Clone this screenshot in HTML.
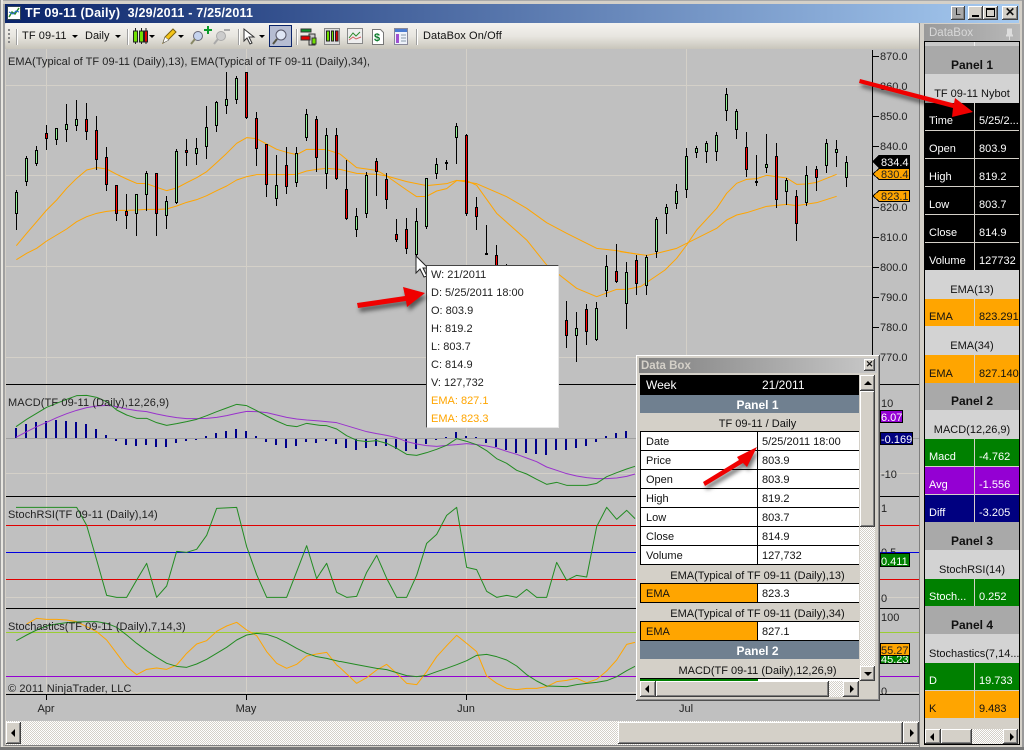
<!DOCTYPE html>
<html><head><meta charset="utf-8"><title>TF 09-11 (Daily)</title>
<style>
html,body{margin:0;padding:0;width:1024px;height:750px;overflow:hidden;background:#d4d0c8}
body{position:relative;font:11px/13px "Liberation Sans",sans-serif;color:#111}
div{position:absolute;box-sizing:border-box;white-space:nowrap}
svg{position:absolute;left:0;top:0}
svg text{font:11px "Liberation Sans",sans-serif;fill:#222}
.btn{background:#d4d0c8;box-shadow:inset -1px -1px #404040,inset 1px 1px #fff,inset -2px -2px #808080}
.hatch{background:repeating-conic-gradient(#d4d0c8 0 25%,#fff 0 50%) 0 0/2px 2px}
.tl::after,.tr::after,.tu::after,.td::after{content:"";position:absolute;left:50%;top:50%;width:0;height:0;border:4px solid transparent}
.tl::after{border-right-color:#000;border-left:0;margin:-4px 0 0 -3px}
.tr::after{border-left-color:#000;border-right:0;margin:-4px 0 0 -1px}
.tu::after{border-bottom-color:#000;border-top:0;margin:-2px 0 0 -4px}
.td::after{border-top-color:#000;border-bottom:0;margin:-2px 0 0 -4px}
.dd{width:0;height:0;border:3px solid transparent;border-top:3px solid #000;border-bottom:0;top:35px}
.sep{width:1px;height:16px;top:29px;background:#a0a0a0;box-shadow:1px 0 #fff}
/* right panel */
.r{left:925px;width:94px;padding-bottom:2px;display:flex;align-items:flex-end;justify-content:center;overflow:hidden}
.pn{background:#a9a9a9;font-weight:bold;font-size:12px;color:#111;padding-bottom:2px}
.hd{background:#d3d3d3}
.c{padding:0 0 2px 4px;display:flex;align-items:flex-end;overflow:hidden}
.a{left:925px;width:49px}.b{left:975px;width:44px}
.k{background:#000;color:#fff}.o{background:#ffa500;color:#111}.g{background:#008000;color:#fff}.p{background:#9400d3;color:#fff}.n{background:#000080;color:#fff}
/* data box dialog */
.ph{left:0;width:235px;text-align:center;height:19px;line-height:22px;background:#d4d0c8;overflow:hidden}
.pb{left:0;width:219px;text-align:center;height:18px;line-height:21px;background:#708090;color:#fff;font-weight:bold;font-size:12px;padding-left:16px;overflow:hidden}
.l{left:0;width:118px;height:19px;background:#fff;border:1px solid #000;border-width:0 1px 1px 1px;padding-left:5px;line-height:20px}
.v{left:118px;width:101px;height:19px;background:#fff;border-bottom:1px solid #000;padding-left:4px;line-height:20px}
.tip{left:431px;color:#222;line-height:14px}
</style></head>
<body>
<!-- outer frame -->
<div style="left:0;top:0;width:1024px;height:4px;background:#d4d0c8;border-top:1px solid #aaa"></div>
<div style="left:0;top:0;width:1px;height:750px;background:#999"></div>
<div style="left:1px;top:0;width:2px;height:750px;background:#e8e6e0"></div>
<div style="left:3px;top:4px;width:2px;height:742px;background:#a0a0a0"></div>
<div style="left:1022px;top:0;width:2px;height:750px;background:#999"></div>
<div style="left:0;top:747px;width:1024px;height:3px;background:#777"></div>

<!-- title bar -->
<div style="left:5px;top:4px;width:1014px;height:19px;background:linear-gradient(90deg,#0a246a,#a6caf0)"></div>
<svg width="1024" height="30" style="z-index:2"><rect x="7.5" y="6.5" width="13" height="13" fill="#fff" stroke="#345"/><path d="M9 17l3-5 3 2 4-6" fill="none" stroke="#2a8a2a" stroke-width="1.5"/><path d="M9 12l4 2 3-3 3 1" fill="none" stroke="#2a6ad0"/></svg>
<div style="left:25px;top:5px;color:#fff;font:bold 12.5px/17px 'Liberation Sans',sans-serif;letter-spacing:.22px;white-space:pre">TF 09-11 (Daily)  3/29/2011 - 7/25/2011</div>
<div class="btn" style="left:951px;top:6px;width:14px;height:14px;background:#a8a8a8;font:10px/13px 'Liberation Sans',sans-serif;text-align:center">L</div>
<div class="btn" style="left:968px;top:6px;width:15px;height:14px"><div style="left:4px;top:9px;width:7px;height:2px;background:#000"></div></div>
<div class="btn" style="left:983px;top:6px;width:15px;height:14px"><div style="left:3px;top:2px;width:9px;height:9px;border:1px solid #000;border-top-width:2px"></div></div>
<div class="btn" style="left:1002px;top:6px;width:16px;height:14px;font:bold 12px/13px 'Liberation Sans',sans-serif;text-align:center">✕</div>

<!-- toolbar -->
<div style="left:5px;top:23px;width:914px;height:26px;background:linear-gradient(#f4f3ef,#e8e6e0 50%,#c8c5bb);border-radius:2px 2px 0 0"></div>
<div style="left:8px;top:29px;width:2px;height:15px;background:repeating-linear-gradient(#888 0 2px,transparent 2px 4px)"></div>
<div class="sep" style="left:16px"></div>
<div style="left:22px;top:29px;line-height:15px;letter-spacing:.1px">TF 09-11</div><div class="dd" style="left:72px"></div>
<div style="left:85px;top:29px;line-height:15px">Daily</div><div class="dd" style="left:115px"></div>
<div class="sep" style="left:127px"></div><div class="dd" style="left:149px"></div>
<div class="dd" style="left:178px"></div><div class="sep" style="left:238px"></div><div class="dd" style="left:259px"></div>
<div style="left:269px;top:25px;width:23px;height:22px;background:#b6bdd2;border:1px solid #0a246a"></div>
<div class="sep" style="left:296px"></div><div class="sep" style="left:416px"></div>
<div style="left:423px;top:29px;line-height:15px;letter-spacing:.1px">DataBox On/Off</div>
<svg width="1024" height="50" style="z-index:2">
<g stroke="#222"><path d="M135.5 28v16M141.5 28v16M146 28v16"/><rect x="133.5" y="31" width="4" height="11" fill="#70e000"/><rect x="139.5" y="31" width="4" height="11" fill="#70e000"/><rect x="144.5" y="31" width="3" height="11" fill="#e00000"/></g>
<path d="M163 43l2-6 8-8 3 3-8 8z" fill="#f5c518" stroke="#7a6010"/><path d="M163 43l2-6 4 3z" fill="#fff" stroke="#555" stroke-width=".5"/>
<circle cx="198" cy="36" r="4.5" fill="#c5d3ee" stroke="#667"/><path d="M195 39l-4 5" stroke="#886" stroke-width="2"/><path d="M204 29h3v-3h2v3h3v2h-3v3h-2v-3h-3z" fill="#0a9a2a"/>
<circle cx="221" cy="36" r="4.5" fill="#ccc" stroke="#aaa"/><path d="M218 39l-4 5" stroke="#aaa" stroke-width="2"/><path d="M224 30h6" stroke="#aaa" stroke-width="2"/>
<path d="M244 29v12l3-3 3 6 2-1-3-6h5z" fill="#fff" stroke="#333"/>
<circle cx="281" cy="35" r="5" fill="#dfe6f5" stroke="#556"/><path d="M277 39l-4 5" stroke="#554" stroke-width="2"/>
<g stroke="#333"><rect x="301" y="29" width="10" height="3" fill="#0a9a2a"/><rect x="309" y="34" width="6" height="11" fill="#ccc"/><rect x="301" y="36" width="9" height="4" fill="#e00000"/><rect x="312" y="38" width="4" height="6" fill="#70e000"/></g>
<rect x="324.5" y="28.5" width="15" height="16" fill="#ddd" stroke="#888"/><g stroke="#222"><rect x="326.5" y="31" width="3" height="10" fill="#70e000"/><rect x="331.5" y="31" width="2" height="10" fill="#70e000"/><rect x="335.5" y="31" width="2.5" height="10" fill="#e00000"/></g>
<rect x="347.5" y="28.5" width="15" height="15" fill="#eee" stroke="#888"/><path d="M349 38l4-5 3 3 4-4" fill="none" stroke="#2a8a2a"/><path d="M349 40l4-3 3 2 5-2" fill="none" stroke="#d06060"/>
<path d="M372.5 29.5h8l3 3v12h-11z" fill="#fff" stroke="#777"/><text x="374" y="41" style="font:bold 11px 'Liberation Sans',sans-serif;fill:#0a7a2a">$</text>
<rect x="394.5" y="28.5" width="13" height="16" fill="#eef2fa" stroke="#889"/><rect x="395" y="29" width="12" height="3" fill="#4a7ad0"/><rect x="396" y="34" width="3" height="9" fill="#a050d0"/><path d="M401 35h5M401 38h5M401 41h5" stroke="#89a"/>
</svg>

<!-- chart background -->
<div style="left:6px;top:49px;width:913px;height:672px;background:#c0c0c0"></div>
<div style="left:919px;top:23px;width:1px;height:724px;background:#808080"></div>

<svg width="1024" height="750">
<g shape-rendering="crispEdges" stroke="#d4d0c8" fill="none">
<path d="M46.5 49V694M246.5 49V694M466.5 49V694M686.5 49V694"/>
<path d="M6 85.5H872M6 175.5H872M6 266.5H872M6 357.5H872M6 473.5H919M6 597.5H919M6 692.5H919"/>
</g>
<g shape-rendering="crispEdges" fill="none">
<path d="M6 438.5H919" stroke="#a0a0a0"/>
<path d="M6 525.5H919M6 579.5H919" stroke="#e00000"/><path d="M6 552.5H919" stroke="#0000e0"/>
<path d="M6 632.5H919" stroke="#9acd32"/><path d="M6 676.5H919" stroke="#9400d3"/>
<path d="M6 384.5H919M6 496.5H919M6 608.5H919M6 694.5H919M872.5 50V385" stroke="#000"/>
<path d="M46.5 694v6M246.5 694v6M466.5 694v6M686.5 694v6" stroke="#000"/>
<path d="M872 56.5h7M872 86.5h7M872 116.5h7M872 146.5h7M872 207.5h7M872 237.5h7M872 267.5h7M872 297.5h7M872 327.5h7M872 357.5h7" stroke="#000"/>
</g>
<!-- EMA lines -->
<g fill="none" stroke="#ffa500" stroke-linejoin="round">
<polyline vector-effect="non-scaling-stroke" transform="translate(0 80) scale(.33333)" points="49,497 80,460 110,425 140,390 170,360 200,325 230,295 260,270 290,263 320,267 350,283 380,297 410,310 440,311 470,322 500,332 530,324 560,308 590,293 620,275 650,248 680,220 710,190 740,173 770,176 800,192 830,208 860,217 890,224 920,208 950,208 980,209 1020,222"/>
<polyline vector-effect="non-scaling-stroke" transform="translate(0 80) scale(.33333)" points="49,539 80,520 110,505 140,483 170,465 200,447 230,425 260,410 290,400 320,394 350,391 380,391 410,390 440,388 470,388 500,387 530,378 560,367 590,359 620,347 650,332 680,318 710,300 740,290 770,284 800,284 830,284 860,284 890,283 920,273 950,268 980,265 1020,268"/>
<polyline vector-effect="non-scaling-stroke" transform="translate(340 80) scale(.33333)" points="0,268 50,280 110,283 140,288 200,305 260,317 320,311 350,301 410,311 500,350 560,385 620,428 680,460 770,505 830,512 900,524"/>
<polyline vector-effect="non-scaling-stroke" transform="translate(340 80) scale(.33333)" points="0,222 50,263 110,271 140,288 200,330 230,350 260,349 290,333 320,326 350,302 380,302 410,316 470,400 560,480 620,555 710,625 770,650 830,628 860,628 900,620"/>
<polyline vector-effect="non-scaling-stroke" transform="translate(620 70) scale(.33333)" points="60,651 135,600 170,565 200,525 230,480 290,415 320,370 350,340 380,328 410,326 440,316 470,320 500,324 530,343 560,342 590,337 620,325 650,313"/>
<polyline vector-effect="non-scaling-stroke" transform="translate(620 70) scale(.33333)" points="0,545 80,556 110,550 170,535 200,520 290,475 320,450 350,435 380,428 440,409 500,403 530,407 590,398 650,379"/>
</g>
<!-- candles -->
<g shape-rendering="crispEdges">
<path stroke="#000" fill="none" d="M16.5 190V230M26.5 156V186M36.5 146V166M46.5 125V150M56.5 128V145M66.5 104V142M76.5 100V131M86.5 103V140M96.5 116V170M106.5 147V191M116.5 185V221M126.5 194V229M136.5 194V236M146.5 171V211M156.5 173V236M166.5 196V229M176.5 149V204M186.5 139V166M196.5 138V165M206.5 106V159M216.5 101V132M226.5 72V114M236.5 76V104M246.5 72V119M256.5 112V166M266.5 144V197M276.5 155V206M286.5 147V194M296.5 147V187M306.5 109V141M316.5 116V172M326.5 128V189M336.5 128V180M346.5 160V220M356.5 208V237M366.5 172V218M376.5 158V196M386.5 173V209M396.5 219V242M406.5 218V254M416.5 208V256M426.5 178V229M436.5 158V179M446.5 160V170M456.5 123V164M466.5 134V216M476.5 197V230M486.5 225V255M496.5 245V270M506.5 264V266M566.5 301V348M576.5 312V362M586.5 304V345M596.5 302V341M606.5 255V297M616.5 244V283M626.5 262V329M636.5 255V295M646.5 255V295M656.5 217V258M666.5 204V234M676.5 184V209M686.5 148V198M696.5 146V158M706.5 141V163M716.5 132V161M726.5 88V121M736.5 109V139M746.5 132V177M756.5 155V186M766.5 134V173M776.5 143V208M786.5 178V205M796.5 190V241M806.5 166V206M816.5 166V191M826.5 139V173M836.5 140V167M846.5 156V187"/>
<path fill="#000" d="M445 162h3v2h-3zM485 253h3v2h-3zM755 181h3v2h-3z"/>
<path stroke="#000" fill="#90ee90" d="M15.5 192.5h2v21h-2zM25.5 158.5h2v23h-2zM35.5 150.5h2v13h-2zM55.5 128.5h2v11h-2zM65.5 124.5h2v5h-2zM75.5 119.5h2v6h-2zM135.5 194.5h2v19h-2zM145.5 173.5h2v21h-2zM165.5 201.5h2v14h-2zM175.5 151.5h2v51h-2zM195.5 148.5h2v5h-2zM205.5 127.5h2v19h-2zM215.5 102.5h2v23h-2zM225.5 99.5h2v6h-2zM235.5 78.5h2v21h-2zM275.5 185.5h2v13h-2zM295.5 153.5h2v29h-2zM305.5 114.5h2v23h-2zM325.5 135.5h2v38h-2zM355.5 216.5h2v13h-2zM365.5 175.5h2v38h-2zM415.5 221.5h2v33h-2zM425.5 178.5h2v48h-2zM435.5 164.5h2v9h-2zM455.5 126.5h2v11h-2zM575.5 328.5h2v7h-2zM595.5 308.5h2v31h-2zM605.5 266.5h2v24h-2zM625.5 272.5h2v31h-2zM645.5 257.5h2v28h-2zM655.5 219.5h2v32h-2zM665.5 207.5h2v6h-2zM675.5 191.5h2v12h-2zM685.5 156.5h2v33h-2zM695.5 148.5h2v4h-2zM705.5 143.5h2v8h-2zM715.5 135.5h2v16h-2zM725.5 94.5h2v16h-2zM735.5 111.5h2v18h-2zM765.5 164.5h2v3h-2zM785.5 180.5h2v11h-2zM805.5 175.5h2v27h-2zM825.5 143.5h2v22h-2zM835.5 149.5h2v3h-2zM845.5 162.5h2v15h-2z"/>
<path stroke="#000" fill="#f00" d="M45.5 133.5h2v5h-2zM85.5 119.5h2v12h-2zM95.5 130.5h2v29h-2zM105.5 157.5h2v27h-2zM115.5 185.5h2v28h-2zM125.5 211.5h2v4h-2zM155.5 173.5h2v40h-2zM185.5 150.5h2v2h-2zM245.5 72.5h2v45h-2zM255.5 118.5h2v30h-2zM265.5 144.5h2v40h-2zM285.5 165.5h2v21h-2zM315.5 119.5h2v38h-2zM335.5 135.5h2v43h-2zM345.5 189.5h2v29h-2zM375.5 161.5h2v10h-2zM385.5 179.5h2v20h-2zM395.5 234.5h2v5h-2zM405.5 229.5h2v19h-2zM465.5 135.5h2v78h-2zM475.5 207.5h2v9h-2zM495.5 255.5h2v15h-2zM565.5 320.5h2v15h-2zM585.5 309.5h2v22h-2zM615.5 271.5h2v10h-2zM635.5 260.5h2v23h-2zM745.5 147.5h2v22h-2zM775.5 156.5h2v43h-2zM795.5 196.5h2v27h-2zM815.5 169.5h2v8h-2z"/>
</g>
<!-- MACD bars -->
<g stroke="#00008b" stroke-width="2" shape-rendering="crispEdges" fill="none">
<path d="M16 428V438M26 424V438M36 422V438M46 421V438M56 420V438M66 421V438M76 422V438M86 424V438M96 429V438M106 435V438M116 439V441M126 439V445M136 439V446M146 439V445M156 439V447M166 439V447M176 439V443M186 439V441M196 439V440M206 436V438M216 433V438M226 431V438M236 429V438M246 431V438M256 436V438M266 439V442M276 439V445M286 439V448M296 439V446M306 439V442M316 439V443M326 439V441M336 439V444M346 439V448M356 439V450M366 439V448M376 439V446M386 439V446M396 439V449M406 439V451M416 439V449M426 439V444M436 439V440M446 437V438M456 432V438M466 436V438M476 437V438M486 439V443M496 439V447M506 439V450M516 439V453M526 439V453M536 439V454M546 439V455M556 439V450M566 439V450M576 439V448M586 439V446M596 439V442M606 436V438M616 433V438M626 431V438"/>
</g>
<!-- indicator lines -->
<g fill="none" stroke-linejoin="round">
<polyline stroke="#9932cc" vector-effect="non-scaling-stroke" transform="translate(0 380) scale(.33333)" points="48,172 80,155 110,140 140,127 170,113 200,101 230,91 260,83 290,78 320,76 350,80 380,87 410,92 440,95 470,102 500,108 530,113 560,116 590,116 620,115 650,112 680,107 710,100 740,94 770,95 800,98 830,105 860,112 890,117 920,120 960,123"/>
<polyline stroke="#9932cc" vector-effect="non-scaling-stroke" transform="translate(320 420) scale(.33333)" points="0,3 50,8 80,17 110,26 140,35 170,41 200,46 230,53 260,65 290,72 320,77 350,79 380,76 410,74 440,71 470,74 500,78 530,84 560,94 590,103 620,114 650,125 680,141 710,151 740,161 770,168 800,173 830,176 860,176 890,174 920,169 945,162"/>
<polyline stroke="#228b22" vector-effect="non-scaling-stroke" transform="translate(0 380) scale(.33333)" points="48,140 80,118 110,100 140,82 170,70 200,58 230,47 260,46 290,52 320,65 350,90 380,105 410,115 440,115 470,128 500,136 530,131 560,125 590,118 620,107 650,95 680,84 710,73 740,77 770,92 800,108 830,123 860,136 890,140 920,130 960,136"/>
<polyline stroke="#228b22" vector-effect="non-scaling-stroke" transform="translate(320 420) scale(.33333)" points="0,16 20,17 50,27 80,47 110,61 140,65 170,62 200,70 230,85 260,103 290,106 320,98 350,88 380,76 410,56 440,64 470,74 500,92 530,116 560,130 590,151 620,162 650,178 680,193 710,187 740,196 770,196 800,196 830,190 860,170 890,158 920,147 945,139"/>
<polyline stroke="#228b22" vector-effect="non-scaling-stroke" transform="translate(0 380) scale(.33333)" points="48,382 230,382 260,436 290,540 320,646 350,652 380,652 410,600 440,550 470,652 500,618 530,514 560,517 590,508 620,466 650,385 710,382 740,500 770,584 800,652 860,652 890,575 920,497 950,596 960,580"/>
<polyline stroke="#228b22" vector-effect="non-scaling-stroke" transform="translate(320 420) scale(.33333)" points="0,460 20,430 50,517 80,532 110,529 140,457 170,406 200,475 230,532 260,532 290,466 320,370 350,343 380,286 410,262 440,442 470,449 500,514 530,532 560,526 590,532 620,508 650,532 680,532 710,427 740,481 770,466 800,471 830,320 860,262 890,298 920,271 945,296"/>
<polyline stroke="#ffa500" vector-effect="non-scaling-stroke" transform="translate(0 600) scale(.33333)" points="80,72 110,55 140,58 170,58 200,60 230,65 260,80 290,95 320,120 350,160 380,200 410,224 440,208 470,204 500,208 530,195 560,160 590,132 620,122 650,94 680,78 710,67 740,90 770,107 800,155 830,190 860,205 890,193 920,168 950,162 980,157 1010,195 1020,203"/>
<polyline stroke="#ffa500" vector-effect="non-scaling-stroke" transform="translate(340 600) scale(.33333)" points="0,203 50,250 80,233 110,210 140,193 170,220 200,250 230,254 260,215 290,170 320,137 350,106 380,130 410,155 440,228 470,250 500,265 530,269 560,265 590,265 620,260 650,245 680,241 710,235 740,248 770,238 800,213 830,180 860,133 885,127"/>
<polyline stroke="#228b22" vector-effect="non-scaling-stroke" transform="translate(0 600) scale(.33333)" points="49,122 80,105 110,90 140,78 170,72 200,68 230,66 260,65 290,65 320,70 350,82 380,105 410,130 440,152 470,172 500,190 530,199 560,202 590,192 620,178 650,160 680,142 710,120 740,105 770,100 800,103 830,113 860,128 890,145 920,160 950,170 980,175 1020,185"/>
<polyline stroke="#228b22" vector-effect="non-scaling-stroke" transform="translate(340 600) scale(.33333)" points="0,184 50,194 110,205 140,209 170,218 200,227 230,230 260,226 290,215 320,205 350,194 380,182 410,166 440,163 470,170 500,180 530,198 560,224 590,243 620,258 680,260 710,254 740,250 770,247 800,242 830,230 860,212 885,199"/>
</g>
<!-- chart labels -->
<text x="8" y="65" style="letter-spacing:.055px">EMA(Typical of TF 09-11 (Daily),13), EMA(Typical of TF 09-11 (Daily),34),</text>
<text x="8" y="406" style="letter-spacing:.1px">MACD(TF 09-11 (Daily),12,26,9)</text>
<text x="8" y="518" style="letter-spacing:.07px">StochRSI(TF 09-11 (Daily),14)</text>
<text x="8" y="630" style="letter-spacing:.05px">Stochastics(TF 09-11 (Daily),7,14,3)</text>
<text x="8" y="692" style="letter-spacing:.13px">© 2011 NinjaTrader, LLC</text>
<g text-anchor="middle"><text x="46" y="712">Apr</text><text x="246" y="712">May</text><text x="466" y="712">Jun</text><text x="686" y="712">Jul</text></g>
<!-- axis -->
<text x="880" y="60">870.0</text><text x="880" y="90">860.0</text><text x="880" y="120">850.0</text><text x="880" y="150">840.0</text><text x="880" y="211">820.0</text><text x="880" y="241">810.0</text><text x="880" y="271">800.0</text><text x="880" y="301">790.0</text><text x="880" y="331">780.0</text><text x="880" y="361">770.0</text>
<text x="881" y="407">10</text><text x="881" y="478">-10</text><text x="881" y="512">1</text><text x="881" y="556">0.5</text><text x="881" y="602">0</text><text x="881" y="621">100</text><text x="881" y="695">0</text>
<!-- tags -->
<g shape-rendering="crispEdges">
<polygon points="873,161.5 879,155.5 909.5,155.5 909.5,167.5 879,167.5" fill="#000" stroke="#000"/>
<polygon points="873,174 879,168.5 909.5,168.5 909.5,179.5 879,179.5" fill="#ffa500" stroke="#000"/>
<polygon points="873,196 879,190.5 909.5,190.5 909.5,201.5 879,201.5" fill="#ffa500" stroke="#000"/>
<rect x="880.5" y="410.5" width="22" height="12" fill="#9400d3" stroke="#000"/>
<rect x="880.5" y="432.5" width="32" height="12" fill="#000080" stroke="#000"/>
<rect x="880.5" y="553.5" width="29" height="13" fill="#008000" stroke="#000"/>
<rect x="880.5" y="655.5" width="29" height="8" fill="#008000" stroke="#000"/>
</g>
<text x="881" y="663" style="fill:#fff">45.23</text>
<rect x="880.5" y="643.5" width="29" height="12" fill="#ffa500" stroke="#000" shape-rendering="crispEdges"/>
<text x="881" y="166" style="fill:#fff">834.4</text><text x="881" y="178">830.4</text><text x="881" y="200">823.1</text>
<text x="881" y="421" style="fill:#fff">6.07</text><text x="881" y="443" style="fill:#fff">-0.169</text><text x="881" y="565" style="fill:#fff">0.411</text><text x="881" y="654">55.27</text>
<!-- cursor -->
<path d="M416 256V273l4-4 4 8 3-1-4-8h5z" fill="#fff" stroke="#222"/>
</svg>

<!-- tooltip -->
<div style="left:426px;top:265px;width:133px;height:163px;background:#fff;border:1px solid;border-color:#444 #e8e8e8 #e8e8e8 #444"></div>
<div class="tip" style="top:268px">W: 21/2011</div>
<div class="tip" style="top:286px">D: 5/25/2011 18:00</div>
<div class="tip" style="top:304px">O: 803.9</div>
<div class="tip" style="top:322px">H: 819.2</div>
<div class="tip" style="top:340px">L: 803.7</div>
<div class="tip" style="top:358px">C: 814.9</div>
<div class="tip" style="top:376px">V: 127,732</div>
<div class="tip" style="top:394px;color:#ffa500">EMA: 827.1</div>
<div class="tip" style="top:412px;color:#ffa500">EMA: 823.3</div>

<!-- bottom scrollbar -->
<div class="hatch" style="left:6px;top:721px;width:913px;height:24px"></div>
<div class="btn tl" style="left:6px;top:722px;width:15px;height:22px"></div>
<div class="btn" style="left:618px;top:722px;width:285px;height:22px"></div>
<div class="btn tr" style="left:903px;top:722px;width:16px;height:22px"></div>
<div style="left:5px;top:745px;width:914px;height:1px;background:#808080"></div>

<!-- right DataBox -->
<div style="left:924px;top:24px;width:96px;height:17px;background:linear-gradient(90deg,#9a9a9a,#b8b8b8);color:#d8d8d8;padding:3px 0 0 5px;font-size:11.5px">DataBox</div>
<svg width="1024" height="50" style="z-index:2"><path d="M1007.5 29h4v6h1v1h-6v-1h1zM1009.5 36v4" fill="#ddd" stroke="#ddd"/></svg>
<div style="left:924px;top:41px;width:96px;height:704px;background:#d4d0c8;border:1px solid #000"></div>
<div style="left:925px;top:42px;width:94px;height:4px;background:#c8c8c8"></div>
<div style="left:974px;top:42px;width:1px;height:4px;background:#eee"></div>
<div class="r pn" style="top:46px;height:28px">Panel 1</div>
<div class="r hd" style="top:74px;height:29px">TF 09-11 Nybot</div>
<div class="c a k" style="top:103px;height:27px">Time</div><div class="c b k" style="top:103px;height:27px">5/25/2...</div>
<div class="c a k" style="top:131px;height:27px">Open</div><div class="c b k" style="top:131px;height:27px">803.9</div>
<div class="c a k" style="top:159px;height:27px">High</div><div class="c b k" style="top:159px;height:27px">819.2</div>
<div class="c a k" style="top:187px;height:27px">Low</div><div class="c b k" style="top:187px;height:27px">803.7</div>
<div class="c a k" style="top:215px;height:27px">Close</div><div class="c b k" style="top:215px;height:27px">814.9</div>
<div class="c a k" style="top:243px;height:27px">Volume</div><div class="c b k" style="top:243px;height:27px">127732</div>
<div class="r hd" style="top:270px;height:29px">EMA(13)</div>
<div class="c a o" style="top:299px;height:27px">EMA</div><div class="c b o" style="top:299px;height:27px">823.291</div>
<div class="r hd" style="top:326px;height:29px">EMA(34)</div>
<div class="c a o" style="top:355px;height:28px">EMA</div><div class="c b o" style="top:355px;height:28px">827.140</div>
<div class="r pn" style="top:383px;height:27px">Panel 2</div>
<div class="r hd" style="top:410px;height:29px">MACD(12,26,9)</div>
<div class="c a g" style="top:439px;height:27px">Macd</div><div class="c b g" style="top:439px;height:27px">-4.762</div>
<div class="c a p" style="top:467px;height:27px">Avg</div><div class="c b p" style="top:467px;height:27px">-1.556</div>
<div class="c a n" style="top:495px;height:27px">Diff</div><div class="c b n" style="top:495px;height:27px">-3.205</div>
<div class="r pn" style="top:522px;height:28px">Panel 3</div>
<div class="r hd" style="top:550px;height:29px">StochRSI(14)</div>
<div class="c a g" style="top:579px;height:27px">Stoch...</div><div class="c b g" style="top:579px;height:27px">0.252</div>
<div class="r pn" style="top:606px;height:28px">Panel 4</div>
<div class="r hd" style="top:634px;height:29px;justify-content:flex-start;padding-left:4px">Stochastics(7,14...</div>
<div class="c a g" style="top:663px;height:27px">D</div><div class="c b g" style="top:663px;height:27px">19.733</div>
<div class="c a o" style="top:691px;height:27px">K</div><div class="c b o" style="top:691px;height:27px">9.483</div>
<div class="hatch" style="left:925px;top:729px;width:93px;height:15px"></div>
<div class="btn tl" style="left:925px;top:729px;width:16px;height:15px"></div>
<div class="btn" style="left:941px;top:729px;width:31px;height:15px"></div>
<div class="btn tr" style="left:1003px;top:729px;width:15px;height:15px"></div>

<!-- Data Box dialog -->
<div style="left:636px;top:355px;width:244px;height:346px;background:#d4d0c8;box-shadow:inset -1px -1px #505050,inset 1px 1px #fff,inset -2px -2px #909090"></div>
<div style="left:639px;top:358px;width:238px;height:15px;background:linear-gradient(90deg,#808080,#c8c8c8);color:#d4d0c8;font:bold 11.5px/17px 'Liberation Sans',sans-serif;padding-left:2px;overflow:hidden">Data Box</div>
<div class="btn" style="left:864px;top:359px;width:11px;height:12px;font:bold 9px/11px 'Liberation Sans',sans-serif;text-align:center">✕</div>
<div style="left:640px;top:375px;width:235px;height:306px;overflow:hidden">
<div style="left:0;top:0;width:219px;height:20px;background:#000"></div>
<div style="left:6px;top:1px;color:#fff;font-size:12px;line-height:18px">Week</div>
<div style="left:122px;top:1px;color:#fff;font-size:12px;line-height:18px">21/2011</div>
<div class="pb" style="top:20px">Panel 1</div>
<div class="ph" style="top:38px">TF 09-11 / Daily</div>
<div style="left:0;top:56px;width:219px;height:1px;background:#000"></div>
<div class="l" style="top:57px">Date</div><div class="v" style="top:57px">5/25/2011 18:00</div>
<div class="l" style="top:76px">Price</div><div class="v" style="top:76px">803.9</div>
<div class="l" style="top:95px">Open</div><div class="v" style="top:95px">803.9</div>
<div class="l" style="top:114px">High</div><div class="v" style="top:114px">819.2</div>
<div class="l" style="top:133px">Low</div><div class="v" style="top:133px">803.7</div>
<div class="l" style="top:152px">Close</div><div class="v" style="top:152px">814.9</div>
<div class="l" style="top:171px">Volume</div><div class="v" style="top:171px">127,732</div>
<div class="ph" style="top:190px">EMA(Typical of TF 09-11 (Daily),13)</div>
<div style="left:0;top:208px;width:219px;height:1px;background:#000"></div>
<div class="l" style="top:209px;background:#ffa500">EMA</div><div class="v" style="top:209px">823.3</div>
<div class="ph" style="top:228px">EMA(Typical of TF 09-11 (Daily),34)</div>
<div style="left:0;top:246px;width:219px;height:1px;background:#000"></div>
<div class="l" style="top:247px;background:#ffa500">EMA</div><div class="v" style="top:247px">827.1</div>
<div class="pb" style="top:266px">Panel 2</div>
<div class="ph" style="top:285px">MACD(TF 09-11 (Daily),12,26,9)</div>
<div style="left:0;top:303px;width:118px;height:3px;background:#008000;border-top:1px solid #000"></div>
<div style="left:118px;top:303px;width:101px;height:3px;background:#fff;border-top:1px solid #000"></div>
</div>
<div class="hatch" style="left:860px;top:375px;width:15px;height:306px"></div>
<div class="btn tu" style="left:860px;top:375px;width:15px;height:16px"></div>
<div class="btn" style="left:860px;top:391px;width:15px;height:136px"></div>
<div class="btn td" style="left:860px;top:666px;width:15px;height:15px"></div>
<div class="hatch" style="left:640px;top:681px;width:219px;height:16px"></div>
<div class="btn tl" style="left:640px;top:681px;width:16px;height:16px"></div>
<div class="btn" style="left:656px;top:681px;width:173px;height:16px"></div>
<div class="btn tr" style="left:843px;top:681px;width:16px;height:16px"></div>

<!-- red arrows -->
<svg width="1024" height="750" style="z-index:5;filter:drop-shadow(2px 4px 2px rgba(0,0,0,.55))">
<polygon fill="#f00000" points="860,79 954,103.5 955,98 973,112 952,117 953,108 859,83"/>
<polygon fill="#f00000" points="357,303 405,296 403,287 425,293 407,307 406,301 358,308"/>
<polygon fill="#f00000" points="703,482 739,460 737,457 757,447 747,467 743,463 705,486"/>
</svg>
</body></html>
